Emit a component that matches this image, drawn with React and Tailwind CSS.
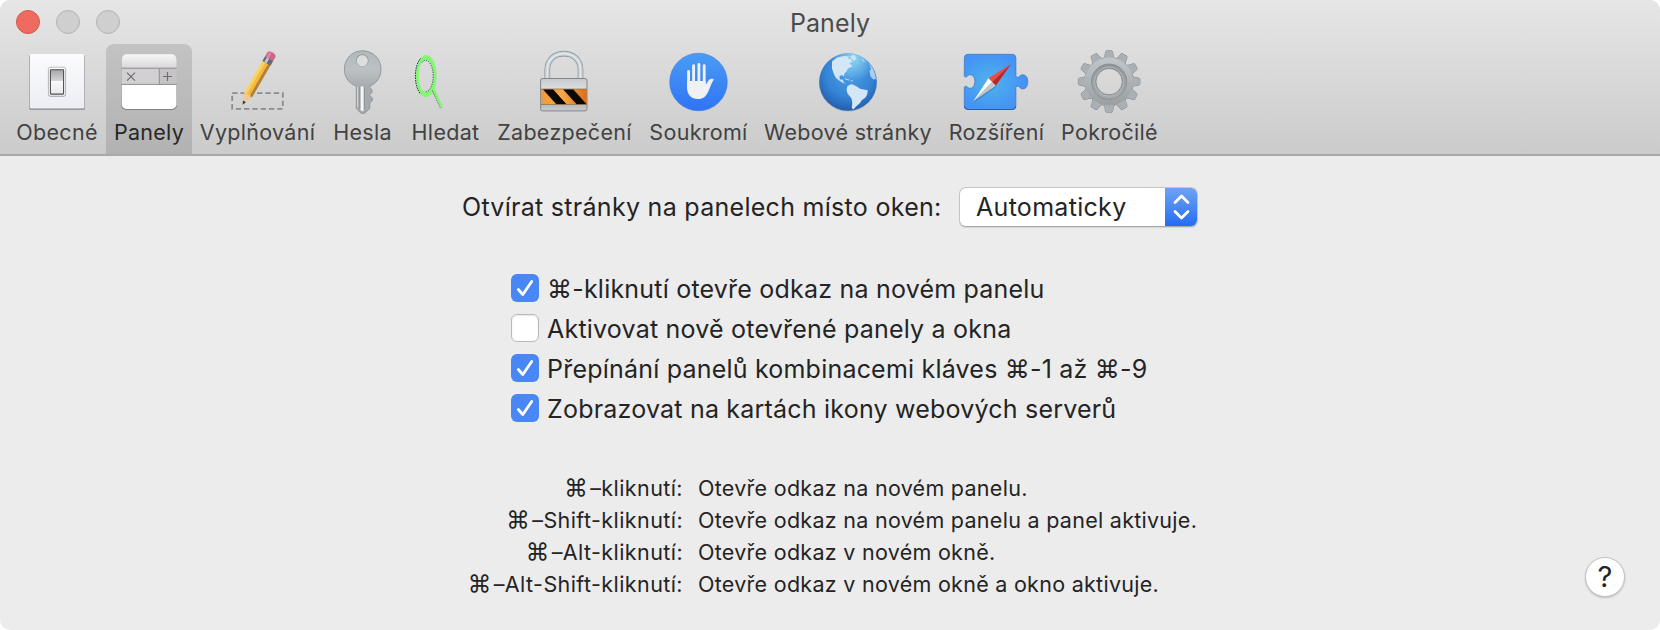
import { useState } from 'react';

const gearTeeth = [0, 30, 60, 90, 120, 150, 180, 210, 240, 270, 300, 330];

function Icon({ children }) {
  return (
    <svg viewBox="0 0 64 64" className="h-16 w-16 shrink-0 overflow-visible">
      {children}
    </svg>
  );
}

function GeneralIcon() {
  return (
    <Icon>
      <defs>
        <linearGradient id="plate" x1="0" y1="0" x2="0" y2="1">
          <stop offset="0" stopColor="#fbfbfc" />
          <stop offset="1" stopColor="#eceef4" />
        </linearGradient>
        <linearGradient id="rocker" x1="0" y1="0" x2="0" y2="1">
          <stop offset="0" stopColor="#a6a6aa" />
          <stop offset="0.46" stopColor="#d6d6d9" />
          <stop offset="0.48" stopColor="#f8f8f8" />
          <stop offset="1" stopColor="#e9e9eb" />
        </linearGradient>
      </defs>
      <rect x="4.3" y="5" width="55.5" height="54.8" rx="1" fill="#85868a" />
      <rect x="4.8" y="4" width="54.5" height="54.6" rx="1" fill="url(#plate)" />
      <rect x="23.2" y="17.8" width="17.8" height="29" rx="2.4" fill="#a9abb0" />
      <rect x="23.4" y="17.2" width="17.2" height="28.8" rx="2.2" fill="#fff" stroke="#a5a7ab" strokeWidth="0.7" />
      <rect x="25.4" y="19.7" width="13.2" height="24.4" rx="0.6" fill="url(#rocker)" stroke="#4b4b50" strokeWidth="1.1" />
    </Icon>
  );
}

function TabsIcon() {
  return (
    <Icon>
      <defs>
        <linearGradient id="tabTop" x1="0" y1="0" x2="0" y2="1">
          <stop offset="0" stopColor="#f7f6f7" />
          <stop offset="1" stopColor="#d9d7d9" />
        </linearGradient>
      </defs>
      <rect x="4.2" y="5" width="55.8" height="55" rx="5" fill="#828282" />
      <rect x="4.7" y="4.6" width="54.8" height="54.4" rx="4.8" fill="#fff" />
      <path d="M4.7 18V9.4a4.8 4.8 0 0 1 4.8-4.8h45.2a4.8 4.8 0 0 1 4.8 4.8V18z" fill="url(#tabTop)" />
      <path d="M4.7 18h37.5v16.5H4.7z" fill="#d2d0d2" />
      <path d="M42.2 18h17.3v16.5H42.2z" fill="#c5c3c5" />
      <path d="M4.5 18.2h55.2M4.5 34.4h55.2M42.3 18.2v16.2" stroke="#8f8d8f" strokeWidth="1" fill="none" />
      <path d="M10 22.6l8 8M18 22.6l-8 8M46 26.5h9M50.5 22v9" stroke="#6f6d6f" strokeWidth="1.2" fill="none" />
    </Icon>
  );
}

function AutofillIcon() {
  return (
    <Icon>
      <rect x="6.2" y="43.2" width="50.6" height="15.6" fill="none" stroke="#8c8c8c" strokeWidth="1.8" strokeDasharray="5.4 2.9" />
      <g transform="translate(16.5 54.8) rotate(30)">
        <path d="M0 0L-4.4 -11L-3 -13H3L4.6 -11Z" fill="#ecc99b" />
        <path d="M0 0L-1.6 -4H1.6Z" fill="#333" />
        <path d="M-4.5 -11L-4.5 -50H-1.5V-12.5L-3 -11Z" fill="#fbd35c" />
        <path d="M-1.6 -12.4V-50H1.8V-12.4L0 -11Z" fill="#f6b93b" />
        <path d="M1.7 -12.4V-50H4.6V-11L3 -11Z" fill="#b58030" />
        <path d="M-4.7 -53.5H4.7V-48H-4.7Z" fill="#65687e" />
        <path d="M-2.5 -53.5H0V-48H-2.5Z" fill="#c9cbd6" />
        <path d="M-4.7 -53V-57.5C-4.7 -61.5 4.7 -61.5 4.7 -57.5V-53Z" fill="#c9688b" />
        <path d="M-3 -53V-57.5Q-3 -59 -1 -59.5L-.5 -53Z" fill="#df8ca6" />
      </g>
    </Icon>
  );
}

function KeyIcon() {
  return (
    <Icon>
      <defs>
        <linearGradient id="keyHead" x1="0" y1="0" x2="0" y2="1">
          <stop offset="0" stopColor="#b3b8bc" />
          <stop offset="0.3" stopColor="#bcc1c4" />
          <stop offset="0.55" stopColor="#a9adb0" />
          <stop offset="1" stopColor="#a6a9ac" />
        </linearGradient>
      </defs>
      <path
        d="M31.5.8C42 .8 50 8.7 50 19.2C50 27.5 45.3 33.5 38.8 36.2V37.4L41 40V42.2L38.4 45L41.3 48V50.6L38.8 53V58.5L33.5 63.3H30L25.3 58.2V36.2C18 33.5 13.4 27.5 13.4 19.2C13.4 8.7 21 .8 31.5.8Z"
        fill="url(#keyHead)"
        stroke="#888d90"
        strokeWidth="0.8"
      />
      <circle cx="31.3" cy="10.4" r="6.2" fill="#8b9093" />
      <circle cx="31.3" cy="10.7" r="5.6" fill="#dcdddd" />
      <path d="M29.4 36.5H32.8V60L31.3 61.5L29.4 59.5Z" fill="#f4f5f6" />
      <path d="M28.8 36.5V59M33.3 36.5V60" stroke="#84888b" strokeWidth="0.8" />
      <path d="M26.6 36.5V57.5" stroke="#d6d8da" strokeWidth="1" />
    </Icon>
  );
}

function SearchIcon() {
  return (
    <Icon>
      <path
        fillRule="evenodd"
        d="M12 5C18 5 22.600 14 22.600 26C22.600 38 18 47.200 12 47.200C6 47.200 1.800 38 1.800 26C1.800 14 6 5 12 5ZM11.800 9.800C7.500 9.800 4.800 17 4.800 26C4.800 35 7.500 41.800 11.800 41.800C16.300 41.800 19.200 35 19.200 26C19.200 17 16.300 9.800 11.800 9.800Z"
        fill="#86f573"
      />
      <path d="M6.500 8.500C-.3 16 -.3 36 6.500 44" fill="none" stroke="#182a6a" strokeWidth="1" strokeDasharray="1.5 1" />
      <path d="M8 12.500C12 6.500 19.200 13 19.200 26C19.200 34 16 41.800 11.800 41.800" fill="none" stroke="#24504a" strokeWidth="0.900" strokeDasharray="1.2 1.2" />
      <path d="M18.600 40.500L27 58.600" stroke="#1d3d4a" strokeWidth="1.200" strokeDasharray="1.2 0.8" />
      <path d="M19.400 39L27.800 57.600" stroke="#86f573" strokeWidth="2.600" />
    </Icon>
  );
}

function LockIcon() {
  return (
    <Icon>
      <defs>
        <linearGradient id="lockBody" x1="0" y1="0" x2="0" y2="1">
          <stop offset="0" stopColor="#c6cacd" />
          <stop offset="0.3" stopColor="#dadddf" />
          <stop offset="0.8" stopColor="#b6babd" />
          <stop offset="1" stopColor="#c9cccd" />
        </linearGradient>
        <linearGradient id="lockBand" x1="0" y1="0" x2="1" y2="0">
          <stop offset="0" stopColor="#f09a37" />
          <stop offset="0.45" stopColor="#f8a848" />
          <stop offset="1" stopColor="#d96f1f" />
        </linearGradient>
      </defs>
      <path d="M14.3 30V19.5C14.3 -1.7 47.5 -1.7 47.5 19.5V30" fill="none" stroke="#8a9096" strokeWidth="5.6" />
      <path d="M14.3 30V19.5C14.3 -1.7 47.5 -1.7 47.5 19.5V30" fill="none" stroke="#c3cbd1" strokeWidth="4.4" />
      <path d="M14.3 30V19.5C14.3 -1.7 47.5 -1.7 47.5 19.5V30" fill="none" stroke="#e2e8eb" strokeWidth="1.8" />
      <rect x="7.600" y="28.5" width="46.4" height="32.4" rx="2" fill="url(#lockBody)" stroke="#81868a" strokeWidth="1" />
      <rect x="8" y="39" width="45.8" height="15.5" fill="url(#lockBand)" />
      <path d="M9.8 39.3H20L33.5 54.3H23.3ZM30 39.3H40.2L53.6 54.3H43.6Z" fill="#0b0906" />
      <path d="M8 39H53.8M8 54.5H53.8" stroke="#8d6a49" strokeWidth="0.7" />
    </Icon>
  );
}

function PrivacyIcon() {
  return (
    <Icon>
      <defs>
        <linearGradient id="privacy" x1="0" y1="0" x2="0" y2="1">
          <stop offset="0" stopColor="#4a9cf5" />
          <stop offset="1" stopColor="#2f74f5" />
        </linearGradient>
      </defs>
      <circle cx="31.5" cy="32" r="28.8" fill="url(#privacy)" stroke="#2f6fd6" strokeWidth="0.5" />
      <path d="M21.6 21.5V38M26.6 15.8V32M31.9 14.5V32M37.2 15.8V34" stroke="#2a63c9" strokeWidth="3" strokeLinecap="round" transform="translate(0 .7)" opacity=".45" />
      <path d="M21.6 21.5V38M26.6 15.8V32M31.9 14.5V32M37.2 15.8V34" stroke="#f0f1f4" strokeWidth="2.9" strokeLinecap="round" />
      <path d="M20.1 31H38.7V34.2C40.5 33.5 40.8 29.5 43.8 28.9C45.5 28.6 46.8 29.2 46.7 29.8C44.8 32 43.4 37 41.3 41.5C39 46.5 36 49 31 49C24 49 20.1 44.5 20.1 38Z" fill="#f0f1f4" />
    </Icon>
  );
}

function GlobeIcon() {
  return (
    <Icon>
      <defs>
        <radialGradient id="ocean" cx="0.52" cy="0.35" r="0.68">
          <stop offset="0" stopColor="#4a9fe4" />
          <stop offset="0.6" stopColor="#3584d6" />
          <stop offset="1" stopColor="#205aa8" />
        </radialGradient>
        <radialGradient id="shine" cx="0.6" cy="0.08" r="0.4">
          <stop offset="0" stopColor="#9be0f7" stopOpacity="0.9" />
          <stop offset="1" stopColor="#9be0f7" stopOpacity="0" />
        </radialGradient>
      </defs>
      <circle cx="32" cy="32.6" r="29" fill="#888" opacity=".4" />
      <circle cx="32" cy="32" r="28.8" fill="url(#ocean)" />
      <circle cx="32" cy="32" r="28.8" fill="url(#shine)" />
      <g fill="#d3e6f5">
        <path d="M16 11.5L21 7.5L28 6L33 6.5L32 9L34.5 8.5L36.5 12L33.5 13L36.5 16.5L32 18.5L30.5 21.5L28.5 23.5L27.8 26.5L26 25L23.5 26L23.7 29.5L26.5 29.5L27.8 32.5L29.5 33.5L27 33L22.5 30L19.5 27.5L17.5 23L16 18.5Z" />
        <path d="M34 6L38.5 5L40.5 8.5L38 11L36 9Z" opacity=".9" />
        <path d="M28.5 28.2L33.5 29.7L33 30.5L29 29.2ZM34.5 30.5L37 30.5V31.3H34.5Z" />
        <path d="M31.5 36L35.5 34L40 36L44 38.7L51.7 40.3L51.3 44L49.5 47.5L46 50L43.5 53.5L40 56.5L37.5 59.5L35.8 58L36.3 53L35.5 48.5L31.5 43.5L30.5 40Z" />
        <path d="M53 13.5Q59 19.5 60 29L57.5 29.5L54.5 26.5L53.5 21.5L55 18.5Z" opacity=".75" />
        <path d="M45 8.5L48 9L47 10L50 12L47.5 12Z" opacity=".6" />
      </g>
    </Icon>
  );
}

function ExtensionsIcon() {
  return (
    <Icon>
      <defs>
        <radialGradient id="puzzle" cx="0.42" cy="0.5" r="0.5">
          <stop offset="0" stopColor="#4fb4ea" />
          <stop offset="1" stopColor="#4594f5" />
        </radialGradient>
      </defs>
      <g transform="translate(-.4 0)">
        <path
          d="M3.5 4.3H47.7Q51.3 4.3 51.3 8V26.5C54.5 29 54.5 24.8 58.2 24.8C61.5 24.8 63.2 28 63.2 31.8C63.2 35.8 61.5 38.9 58.2 38.9C54.5 38.9 54.5 34.5 51.3 37V55.8Q51.3 59.5 47.7 59.5H3.5Q-.3 59.5 -.3 55.8V37C2.5 34.8 2.5 38.3 5.5 38.3C8.7 38.3 10.2 35 10.2 31.5C10.2 28 8.7 24.8 5.5 24.8C2.5 24.8 2.5 28.5 -.3 26.3V8Q-.3 4.3 3.5 4.3Z"
          fill="url(#puzzle)"
          stroke="#3872c0"
          strokeWidth="0.7"
        />
        <path d="M-.2 56Q-.2 59.5 3.5 59.5H47.7Q51.2 59.5 51.2 56" fill="none" stroke="#2b5c9e" strokeWidth="1" />
        <path d="M9.5 52.3L25 29L32 36.7Z" fill="#245c9c" opacity=".4" />
        <path d="M46.5 14L23.8 28.3L27.5 32Z" fill="#ee4b45" />
        <path d="M46.5 14L31.2 35.7L27.5 32Z" fill="#bf2624" />
        <path d="M8.8 51.3L23.8 28.3L27.5 32Z" fill="#fff" />
        <path d="M8.8 51.3L31.2 35.7L27.5 32Z" fill="#c4c6c9" />
      </g>
    </Icon>
  );
}

function GearIcon() {
  return (
    <Icon>
      <defs>
        <linearGradient id="gear" gradientUnits="userSpaceOnUse" x1="0" y1="-31" x2="0" y2="31">
          <stop offset="0" stopColor="#c6ced3" />
          <stop offset="0.5" stopColor="#adb3b7" />
          <stop offset="1" stopColor="#94989b" />
        </linearGradient>
        <linearGradient id="gearRing" x1="0" y1="0" x2="0" y2="1">
          <stop offset="0" stopColor="#8f969a" />
          <stop offset="1" stopColor="#a6abae" />
        </linearGradient>
        <mask id="gearHole">
          <rect x="-34" y="-34" width="68" height="68" fill="#fff" />
          <circle r="13.2" fill="#000" />
        </mask>
        <path id="tooth" d="M-6.5 -22L-4.4 -25L-3.4 -29.8Q-3.2 -30.800 -2.200 -30.800H2.200Q3.200 -30.800 3.400 -29.800L4.400 -25L6.500 -22Z" />
      </defs>
      <g transform="translate(31.1 31.6)">
        <g mask="url(#gearHole)">
          <g fill="#888d90" stroke="#888d90" strokeWidth="1">
            {gearTeeth.map((a) => (
              <use key={a} href="#tooth" transform={`rotate(${a})`} />
            ))}
            <circle r="23.8" />
          </g>
          <g fill="#aab0b4">
            {gearTeeth.map((a) => (
              <use key={a} href="#tooth" transform={`rotate(${a})`} />
            ))}
          </g>
          <circle r="24" fill="url(#gear)" />
          <circle r="17.6" fill="url(#gearRing)" stroke="#858a8e" strokeWidth="0.8" />
          <circle r="14.6" fill="none" stroke="#b2b7ba" strokeWidth="1" />
        </g>
        <circle r="13.2" fill="none" stroke="#7b8083" strokeWidth="0.8" />
      </g>
    </Icon>
  );
}

const tabs = [
  { label: 'Obecné', icon: GeneralIcon, width: 'w-[98px]' },
  { label: 'Panely', icon: TabsIcon, width: 'w-[86px]' },
  { label: 'Vyplňování', icon: AutofillIcon, width: 'w-[131px]' },
  { label: 'Hesla', icon: KeyIcon, width: 'w-[79px]' },
  { label: 'Hledat', icon: SearchIcon, width: 'w-[87px]' },
  { label: 'Zabezpečení', icon: LockIcon, width: 'w-[151px]' },
  { label: 'Soukromí', icon: PrivacyIcon, width: 'w-[117px]' },
  { label: 'Webové stránky', icon: GlobeIcon, width: 'w-[182px]' },
  { label: 'Rozšíření', icon: ExtensionsIcon, width: 'w-[115px]' },
  { label: 'Pokročilé', icon: GearIcon, width: 'w-[111px]' },
];

const shortcuts = [
  { keys: '–kliknutí:', text: 'Otevře odkaz na novém panelu.' },
  { keys: '–Shift-kliknutí:', text: 'Otevře odkaz na novém panelu a panel aktivuje.' },
  { keys: '–Alt-kliknutí:', text: 'Otevře odkaz v novém okně.' },
  { keys: '–Alt-Shift-kliknutí:', text: 'Otevře odkaz v novém okně a okno aktivuje.' },
];

function Checkbox({ checked, onChange, children }) {
  return (
    <button type="button" role="checkbox" aria-checked={checked} onClick={onChange} className="flex h-10 items-center gap-2 whitespace-nowrap">
      {checked ? (
        <span className="flex h-7 w-7 items-center justify-center rounded-[6px] bg-[#4a87f6]">
          <svg viewBox="0 0 28 28" className="h-7 w-7">
            <path d="M7.3 15.5l4.500 5L20.7 7.5" fill="none" stroke="#fff" strokeWidth="2.8" strokeLinecap="round" strokeLinejoin="round" />
          </svg>
        </span>
      ) : (
        <span className="h-7 w-7 rounded-[6px] border border-[#b9b9b9] bg-white shadow-[inset_0_1px_2px_rgba(0,0,0,0.1)]" />
      )}
      <span className="pt-[3px] tracking-[0.21px]">{children}</span>
    </button>
  );
}

export default function App() {
  const [active, setActive] = useState('Panely');
  const [options, setOptions] = useState([
    { label: '⌘-kliknutí otevře odkaz na novém panelu', checked: true },
    { label: 'Aktivovat nově otevřené panely a okna', checked: false },
    { label: 'Přepínání panelů kombinacemi kláves ⌘-1 až ⌘-9', checked: true },
    { label: 'Zobrazovat na kartách ikony webových serverů', checked: true },
  ]);

  const toggle = (index) => {
    setOptions(options.map((o, i) => (i === index ? { ...o, checked: !o.checked } : o)));
  };

  return (
    <div className="h-[630px] w-[1660px] bg-white font-['Inter','Liberation_Sans',sans-serif] text-[#242424]">
      <div className="flex h-full flex-col overflow-hidden rounded-[10px] bg-[#ececec]">
        <header className="flex h-[156px] shrink-0 flex-col border-b-2 border-[#a9a9a9] bg-linear-to-b from-[#e6e6e6] to-[#cbcbcb]">
          <div className="grid h-11 grid-cols-[1fr_auto_1fr] items-center">
            <div className="flex gap-4 pl-4">
              <span className="h-6 w-6 rounded-full border border-[#d8584f] bg-[#ed6b60]" />
              <span className="h-6 w-6 rounded-full border border-[#b3b3b3] bg-[#cfcfcf]" />
              <span className="h-6 w-6 rounded-full border border-[#b3b3b3] bg-[#cfcfcf]" />
            </div>
            <h1 className="pt-0.5 text-[25px] leading-[42px] tracking-[0.1px] text-[#4b4b4b]">Panely</h1>
          </div>
          <nav className="flex h-[110px] pl-2">
            {tabs.map(({ label, icon: TabIcon, width }) => (
              <button
                key={label}
                type="button"
                onClick={() => setActive(label)}
                className={`${width} flex h-[110px] shrink-0 flex-col items-center rounded-t-[8px] pt-1.5 whitespace-nowrap ${
                  active === label ? 'bg-black/12 text-[#272727]' : 'text-[#424242]'
                }`}
              >
                <TabIcon />
                <span className="mt-1 text-[21.5px] leading-[28px] tracking-[0.3px]">{label}</span>
              </button>
            ))}
          </nav>
        </header>

        <main className="flex grow flex-col">
          <div className="mt-[31px] flex h-10 items-center pl-[462px] text-[25px] whitespace-nowrap">
            <label className="w-[497px] pt-0.5 tracking-[0.29px]">Otvírat stránky na panelech místo oken:</label>
            <button type="button" className="flex h-10 w-[239px] items-stretch overflow-hidden rounded-[7px] border border-[#c4c4c4] border-b-[#aaa] bg-white shadow-[0_1px_1px_rgba(0,0,0,0.1)]">
              <span className="grow pl-4 text-left leading-[38px] tracking-[0.3px]">Automaticky</span>
              <span className="-my-px -mr-px flex w-[33px] items-center justify-center bg-linear-to-b from-[#6fa4f5] to-[#2268f4]">
                <svg viewBox="0 0 33 40" className="h-10 w-[33px]">
                  <path d="M10 15.5l6.5-6.5 6.5 6.5M10 24.5l6.5 6.5 6.5-6.5" fill="none" stroke="#fff" strokeWidth="2.8" strokeLinecap="round" strokeLinejoin="round" />
                </svg>
              </span>
            </button>
          </div>

          <div className="mt-[41px] flex flex-col items-start pl-[511px] text-[25px]">
            {options.map((option, index) => (
              <Checkbox key={option.label} checked={option.checked} onChange={() => toggle(index)}>
                {option.label}
              </Checkbox>
            ))}
          </div>

          <div className="flex">
            <dl className="mt-[44px] grid w-[1240px] grid-cols-[683px_1fr] gap-x-[15px] text-[21.5px] leading-[32px] whitespace-nowrap">
              {shortcuts.map(({ keys, text }) => (
                <div key={keys} className="contents">
                  <dt className="text-right tracking-[0.42px]">
                    <span className="mr-[2px] text-[23.5px] leading-none">⌘</span>
                    {keys}
                  </dt>
                  <dd className="tracking-[0.28px]">{text}</dd>
                </div>
              ))}
            </dl>
            <button type="button" className="mt-[129px] ml-[345px] flex h-10 w-10 items-center justify-center rounded-full border border-[#c2c2c2] bg-white text-[29px] shadow-[0_1px_2px_rgba(0,0,0,0.2)]">
              ?
            </button>
          </div>
        </main>
      </div>
    </div>
  );
}
